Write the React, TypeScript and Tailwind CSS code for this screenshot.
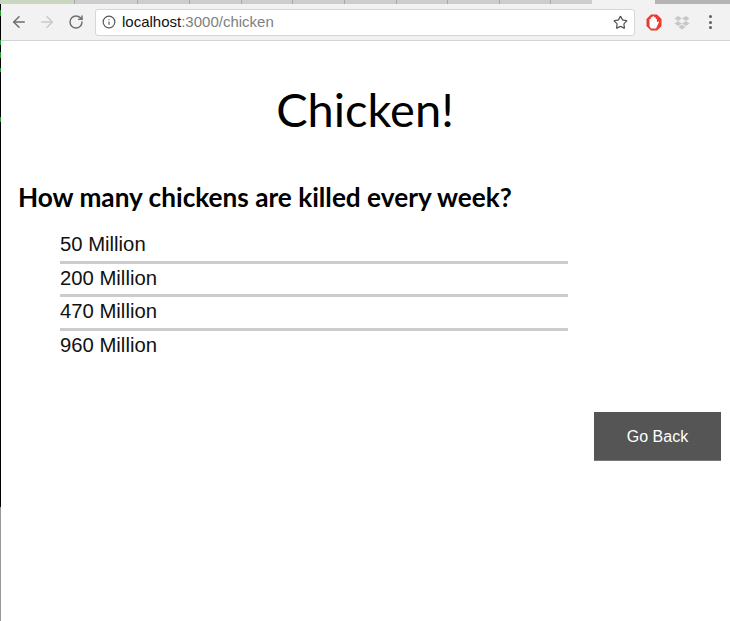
import { ArrowLeft, ArrowRight, RotateCw, Info, Star } from "lucide-react";

const answers = ["50 Million", "200 Million", "470 Million", "960 Million"];
const tabWidths = [63, 52, 52, 51, 52, 52, 51, 52, 51];
// stray green specks on the window edge
const specks = [[10, 6], [40, 5], [52, 6], [68, 4], [117, 5]];

function TabStrip() {
  return (
    <div className="flex h-[4px] bg-[#cdcdcd]">
      <div className="w-[75px] border-r border-[#a9a9a9] bg-[#c9d6c0]" />
      {tabWidths.map((w, i) => (
        <div key={i} className="border-r border-[#a9a9a9]" style={{ width: w }} />
      ))}
      <div className="w-[41px]" />
      <div className="w-[63px] bg-[#f2f2f2]" />
      <div className="flex-1 bg-[#b4b4b4]" />
    </div>
  );
}

function BrowserBar() {
  return (
    <div className="flex h-[37px] items-center border-b border-[#d4d4d4] bg-[#f2f2f2] pl-[10px]">
      <ArrowLeft className="h-[18px] w-[18px] text-[#6e6e6e]" strokeWidth={2} />
      <ArrowRight className="ml-[10px] h-[18px] w-[18px] text-[#c9c9c9]" strokeWidth={2} />
      <RotateCw className="ml-[12px] h-[16px] w-[16px] text-[#6e6e6e]" strokeWidth={2.2} />
      <div className="ml-[11px] flex h-[27px] w-[540px] items-center rounded-[3px] border border-[#d6d6d6] bg-white pl-[6px] pr-[6px]">
        <Info className="h-[14px] w-[14px] text-[#555555]" strokeWidth={2} />
        <span className="ml-[6px] text-[15px] text-[#111111]">
          localhost<span className="text-[#808080]">:3000/chicken</span>
        </span>
        <Star className="ml-auto h-[15px] w-[15px] text-[#555555]" strokeWidth={2} />
      </div>
      <svg className="ml-[11px]" width="16" height="17" viewBox="0 0 16 17">
        <path d="M5 0.500H11L15.500 5V12L11 16.500H5L0.500 12V5z" fill="#ea3b30" />
        <path d="M3.500 9V5h1.300V3.300h1.600V2.200h1.700V3.300h1.600V5h1.300v3.500l1.300-1.300 0.700 0.700-1.500 3.600-1.500 3H5l-1.500-2.500z" fill="#ffffff" />
      </svg>
      <svg className="ml-[12px]" width="16" height="15" viewBox="0 0 16 15">
        <path d="M4 1L0.500 3.500L4 6L0.500 8.500L4 11L8 8.500L12 11L15.500 8.500L12 6L15.500 3.500L12 1L8 3.500zM4 6L8 3.500L12 6L8 8.500zM4.500 12L8 9.500L11.500 12L8 14.500z" fill="#c8c8c8" />
      </svg>
      <div className="ml-[19px] flex flex-col gap-[2.500px]">
        <div className="h-[3px] w-[3px] rounded-full bg-[#5f5f5f]" />
        <div className="h-[3px] w-[3px] rounded-full bg-[#5f5f5f]" />
        <div className="h-[3px] w-[3px] rounded-full bg-[#5f5f5f]" />
      </div>
    </div>
  );
}

export default function App() {
  return (
    <div className="relative h-[621px] overflow-hidden bg-white font-['Liberation_Sans',sans-serif]">
      <TabStrip />
      <BrowserBar />
      <div>
        <h1 className="pt-[38px] text-center font-['Lato',sans-serif] text-[47px] leading-[60px] text-black">Chicken!</h1>
        <h2 className="ml-[18px] mt-[42px] font-['Lato',sans-serif] text-[26.200px] font-bold leading-[32px] text-black">
          How many chickens are killed every week?
        </h2>
        <ul className="ml-[60px] mt-[17px] w-[508px]">
          {answers.map((a, i) => (
            <li
              key={a}
              className={`h-[33.500px] text-[20.300px] leading-[29px] text-[#111111] ${i < 3 ? "border-b-[3px] border-[#cccccc]" : ""}`}
            >
              {a}
            </li>
          ))}
        </ul>
        <div className="mt-[48px] flex justify-end pr-[9px]">
          <button className="h-[49px] w-[127px] border-b border-[#777777] bg-[#555555] pt-[1px] text-[16px] text-white">Go Back</button>
        </div>
      </div>
      {/* window edge */}
      <div className="absolute left-0 top-[4px] h-[503px] w-px bg-black" />
      <div className="absolute left-0 top-[507px] h-[114px] w-px bg-[#999999]" />
      {specks.map(([top, h]) => (
        <div key={top} className="absolute left-0 w-px bg-[#1f9e2c]" style={{ top, height: h }} />
      ))}
    </div>
  );
}
